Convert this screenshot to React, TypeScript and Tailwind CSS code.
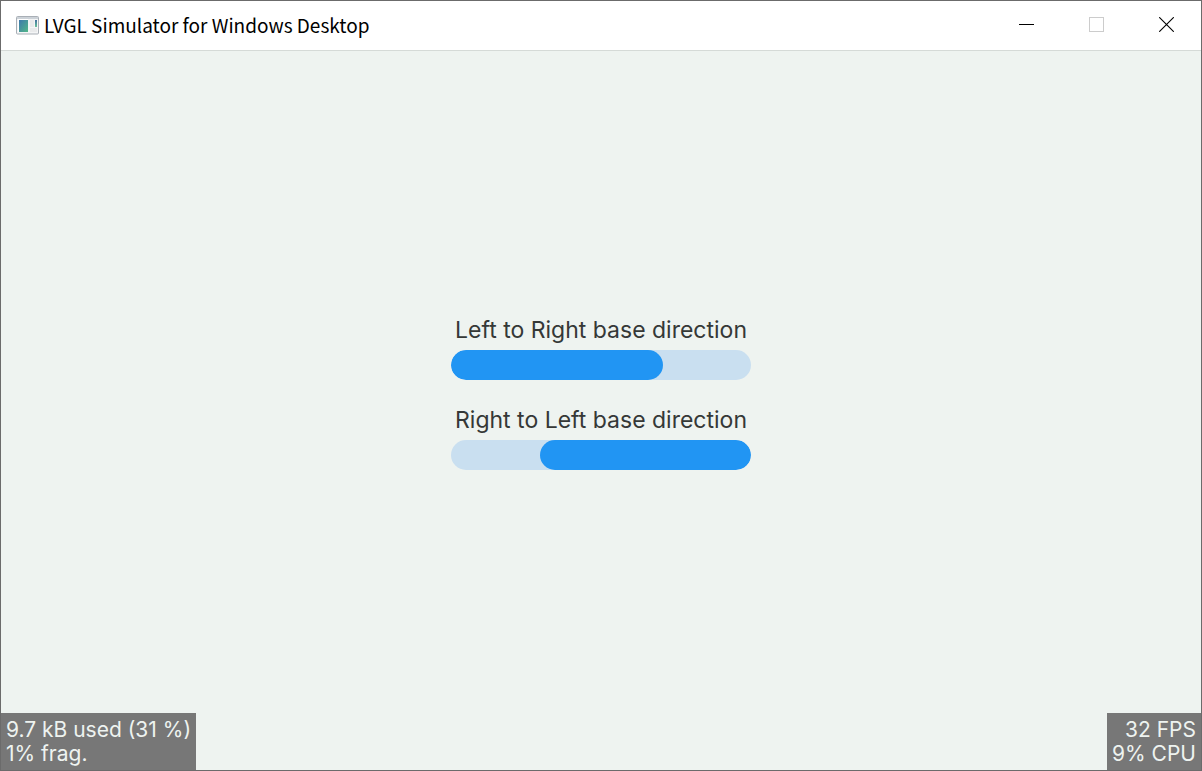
type BarProps = {
  id: string;
  label: string;
  value: number;
  rtl?: boolean;
};

const bars: BarProps[] = [
  { id: "bar-ltr", label: "Left to Right base direction", value: 70.5 },
  { id: "bar-rtl", label: "Right to Left base direction", value: 70.5, rtl: true },
];

function AppIcon() {
  return (
    <svg className="h-5 w-6 shrink-0" viewBox="0 0 24 20" aria-hidden="true">
      <defs>
        <linearGradient id="pane" x1="0" y1="0" x2="1" y2="1">
          <stop offset="0" stopColor="#3f78ad" />
          <stop offset="1" stopColor="#52b788" />
        </linearGradient>
        <linearGradient id="side" x1="0" y1="0" x2="0" y2="1">
          <stop offset="0" stopColor="#426f9f" />
          <stop offset="1" stopColor="#69c39a" />
        </linearGradient>
      </defs>
      <rect x="0.5" y="1.5" width="22" height="17.5" rx="1" fill="#f4f5f6" stroke="#a9afb6" />
      <rect x="1" y="2" width="21" height="2" fill="#ccd2d8" />
      <rect x="2" y="4" width="10" height="13" fill="#fff" />
      <rect x="3" y="5" width="9" height="12" fill="url(#pane)" />
      <rect x="14" y="5" width="4" height="7" fill="#e9eaeb" />
      <rect x="14" y="13" width="7" height="4" fill="#e9eaeb" />
      <rect x="19" y="5" width="2" height="7" fill="url(#side)" />
    </svg>
  );
}

function TitleBar() {
  return (
    <header className="flex h-[50px] items-center justify-between border-b border-[#d5dad7] bg-white pb-0.5 pl-[15px]">
      <div className="flex items-center gap-1">
        <AppIcon />
        <h1 className="font-['Noto_Sans_CJK_SC','Noto_Sans',sans-serif] text-[19px] leading-6 text-black">
          LVGL Simulator for Windows Desktop
        </h1>
      </div>
      <div className="flex h-full">
        <button type="button" aria-label="Minimize" className="grid w-[70px] place-items-center">
          <svg width="15" height="15" viewBox="0 0 15 15" shapeRendering="crispEdges">
            <path d="M0 7.5h15" stroke="#000" />
          </svg>
        </button>
        <button type="button" aria-label="Maximize" disabled className="grid w-[70px] place-items-center">
          <svg width="15" height="15" viewBox="0 0 15 15" shapeRendering="crispEdges">
            <rect x="0.5" y="0.5" width="14" height="14" fill="none" stroke="#ccc" />
          </svg>
        </button>
        <button type="button" aria-label="Close" className="grid w-[70px] place-items-center">
          <svg width="15" height="15" viewBox="0 0 15 15">
            <path d="M0.2 0.2l14.6 14.6M14.8 0.2L0.2 14.8" stroke="#000" strokeWidth="1.1" />
          </svg>
        </button>
      </div>
    </header>
  );
}

function Bar({ id, label, value, rtl }: BarProps) {
  return (
    <div className="flex flex-col items-center gap-2">
      <span id={id} className="text-[23px] leading-6 whitespace-nowrap text-[#353837]">
        {label}
      </span>
      <div
        role="progressbar"
        aria-labelledby={id}
        aria-valuenow={value}
        dir={rtl ? "rtl" : "ltr"}
        className="h-[30px] w-[300px] overflow-hidden rounded-full bg-[#c9dff0]"
      >
        <div className="h-full rounded-full bg-[#2195f3]" style={{ width: `${value}%` }} />
      </div>
    </div>
  );
}

export default function App() {
  return (
    <div className="flex min-h-screen flex-col border border-[#6b6b6b] bg-[#eef3f0] font-['Inter',sans-serif]">
      <TitleBar />
      <main className="relative flex flex-1 flex-col items-center justify-center gap-7 pb-[34px]">
        {bars.map((bar) => (
          <Bar key={bar.id} {...bar} />
        ))}

        {/* Monitor overlays */}
        <div className="absolute bottom-0 left-0 bg-[#777] px-[5px] pt-[5px] pb-1 text-[21px] leading-6 whitespace-nowrap text-[#eef3f0]">
          <p>9.7 kB used (31 %)</p>
          <p>1% frag.</p>
        </div>
        <div className="absolute right-0 bottom-0 bg-[#777] px-[5px] pt-[5px] pb-1 text-right text-[21px] leading-6 whitespace-nowrap text-[#eef3f0]">
          <p>32 FPS</p>
          <p>9% CPU</p>
        </div>
      </main>
    </div>
  );
}
